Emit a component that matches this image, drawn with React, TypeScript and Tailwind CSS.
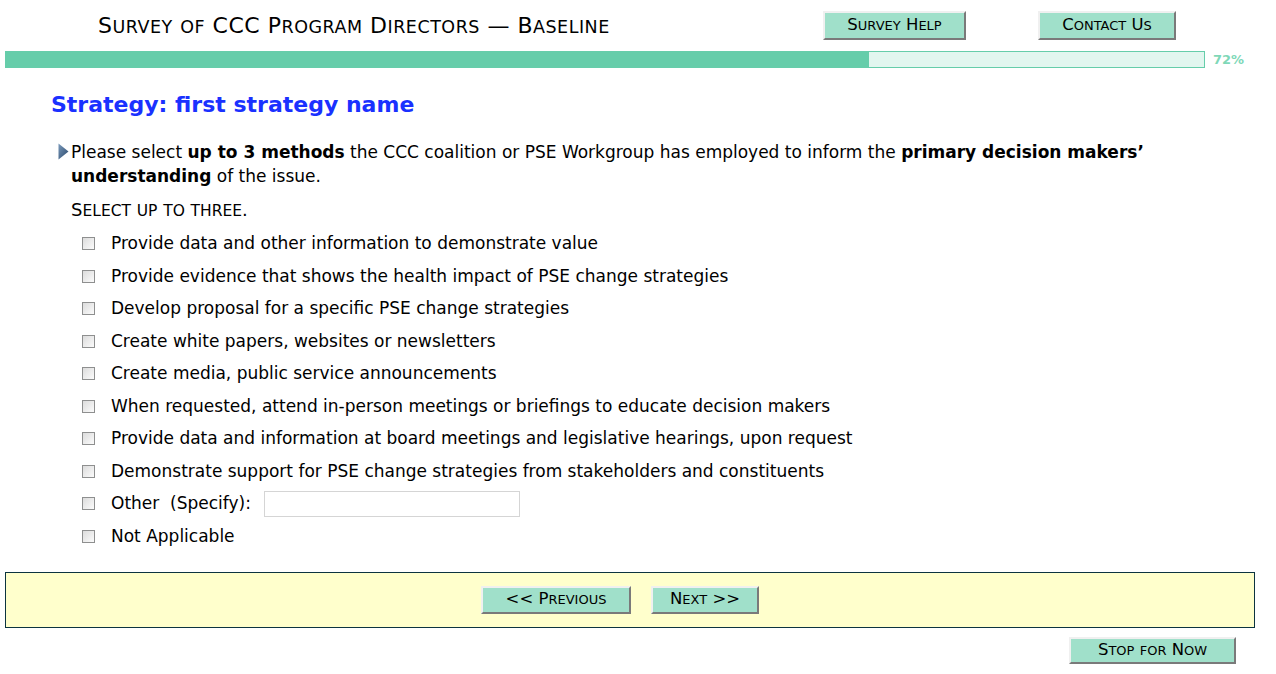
import { useState } from 'react';

const options = [
  'Provide data and other information to demonstrate value',
  'Provide evidence that shows the health impact of PSE change strategies',
  'Develop proposal for a specific PSE change strategies',
  'Create white papers, websites or newsletters',
  'Create media, public service announcements',
  'When requested, attend in-person meetings or briefings to educate decision makers',
  'Provide data and information at board meetings and legislative hearings, upon request',
  'Demonstrate support for PSE change strategies from stakeholders and constituents',
];

// small caps drawn by hand: capitals at full size, lowercase as smaller capitals
function Caps({ text, small }: { text: string; small: string }) {
  return (
    <span className="whitespace-pre">
      {text.split('').map((ch, i) =>
        ch >= 'a' && ch <= 'z' ? (
          <span key={i} className={small}>{ch.toUpperCase()}</span>
        ) : (
          <span key={i}>{ch}</span>
        )
      )}
    </span>
  );
}

const btn =
  'bg-[#a0e0ca] text-black text-[16.5px] leading-none border-2 border-t-[#f0f0f0] border-l-[#f0f0f0] border-b-[#7a7a7a] border-r-[#7a7a7a] flex items-center justify-center';

function Box({ checked, onClick }: { checked: boolean; onClick: () => void }) {
  return (
    <span
      onClick={onClick}
      className="w-[13px] h-[13px] border border-[#8e8f8f] bg-gradient-to-br from-[#dcdcdc] to-[#fbfbfb] flex items-center justify-center shrink-0 cursor-pointer"
    >
      {checked && <span className="w-[7px] h-[7px] bg-[#333]" />}
    </span>
  );
}

export default function App() {
  const [checks, setChecks] = useState<Record<number, boolean>>({});
  const [other, setOther] = useState('');

  const toggle = (i: number) => setChecks(c => ({ ...c, [i]: !c[i] }));

  return (
    <div className="w-[1276px] h-[674px] bg-white font-['DejaVu_Sans',Verdana,sans-serif] text-black overflow-hidden">
      {/* Header */}
      <div className="flex items-center h-[50px] pt-[1px]">
        <div className="ml-[98px] w-[725px] text-[22px] leading-none whitespace-nowrap tracking-[0.5px]">
          <Caps text="Survey of CCC Program Directors — Baseline" small="text-[17.5px]" />
        </div>
        <button className={`${btn} w-[143px] h-[29px]`}>
          <Caps text="Survey Help" small="text-[13px]" />
        </button>
        <button className={`${btn} w-[138px] h-[29px] ml-[72px]`}>
          <Caps text="Contact Us" small="text-[13px]" />
        </button>
      </div>

      {/* Progress */}
      <div className="flex items-center ml-[5px]">
        <div className="w-[1200px] h-[17px] border border-[#66cdaa] bg-[#e2f6ef] flex">
          <div className="w-[863px] h-full bg-[#66cdaa]" />
        </div>
        <span className="ml-[8px] text-[13px] font-bold text-[#7fd8b8]">72%</span>
      </div>

      {/* Content */}
      <div className="pl-[51px] pt-[22px]">
        <h1 className="text-[22px] font-bold text-[#1a31ff] leading-[26px]">Strategy: first strategy name</h1>

        <div className="flex mt-[22px] ml-[7px] pr-[80px]">
          <svg width="11" height="17" viewBox="0 0 11 17" className="shrink-0 mt-[3px] mr-[2px]">
            <defs>
              <linearGradient id="tri" x1="0" y1="0" x2="1" y2="1">
                <stop offset="0" stopColor="#7b9abb" />
                <stop offset="1" stopColor="#27466a" />
              </linearGradient>
            </defs>
            <path d="M0.5 0.5 L10.5 8.5 L0.5 16.5 Z" fill="url(#tri)" />
          </svg>
          <p className="text-[17px] leading-[24px]">
            Please select <b>up to 3 methods</b> the CCC coalition or PSE Workgroup has employed to inform the{' '}
            <b>primary decision makers’ understanding</b> of the issue.
          </p>
        </div>

        <div className="ml-[20px] mt-[12px] text-[18px] leading-[20px] whitespace-nowrap">
          <Caps text="Select up to three." small="text-[15.5px]" />
        </div>

        <div className="ml-[31px] mt-[7px] flex flex-col">
          {options.map((o, i) => (
            <div key={i} className="flex items-center h-[32.5px]">
              <Box checked={!!checks[i]} onClick={() => toggle(i)} />
              <span className="ml-[16px] text-[17px] leading-none">{o}</span>
            </div>
          ))}
          <div className="flex items-center h-[32.5px]">
            <Box checked={!!checks[8]} onClick={() => toggle(8)} />
            <span className="ml-[16px] text-[17px] leading-none whitespace-pre">Other  (Specify):</span>
            <input
              value={other}
              onChange={e => setOther(e.target.value)}
              className="ml-[13px] w-[256px] h-[26px] border border-[#d5d5d5] bg-white outline-none px-1 text-[14px]"
            />
          </div>
          <div className="flex items-center h-[32.5px]">
            <Box checked={!!checks[9]} onClick={() => toggle(9)} />
            <span className="ml-[16px] text-[17px] leading-none">Not Applicable</span>
          </div>
        </div>
      </div>

      {/* Footer nav */}
      <div className="mx-[5px] mt-[19px] w-[1250px] h-[56px] bg-[#ffffcc] border border-[#0c3440] flex items-center justify-center gap-[20px] pr-[20px]">
        <button className={`${btn} w-[150px] h-[28px]`}>
          <Caps text="<< Previous" small="text-[13px]" />
        </button>
        <button className={`${btn} w-[108px] h-[28px]`}>
          <Caps text="Next >>" small="text-[13px]" />
        </button>
      </div>

      <div className="flex justify-end pr-[40px] mt-[9px]">
        <button className={`${btn} w-[167px] h-[27px]`}>
          <Caps text="Stop for Now" small="text-[13px]" />
        </button>
      </div>
    </div>
  );
}
